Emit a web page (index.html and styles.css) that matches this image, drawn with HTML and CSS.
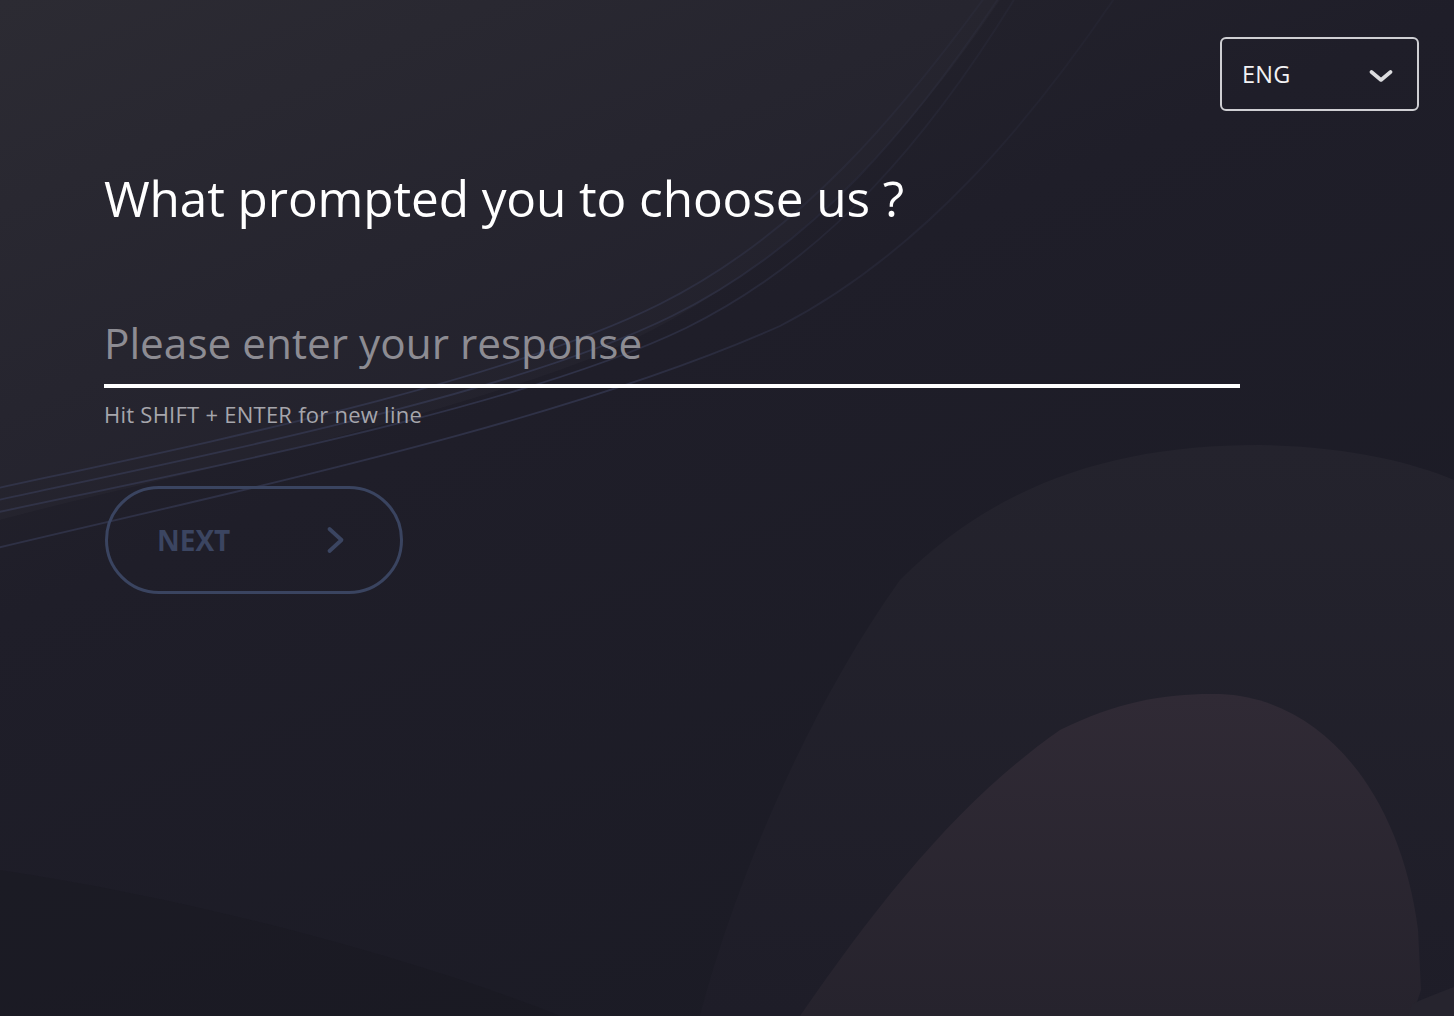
FILE: index.html
```html
<!DOCTYPE html>
<html lang="en">
<head>
<meta charset="utf-8">
<title>What prompted you to choose us ?</title>
<link rel="stylesheet" href="styles.css">
</head>
<body>
<div class="page">
  <svg class="backdrop" viewBox="0 0 1454 1016" preserveAspectRatio="none" aria-hidden="true">
    <defs>
      <linearGradient id="bg" x1="0" y1="0" x2="0.6" y2="1">
        <stop offset="0" stop-color="#28272f"/>
        <stop offset="0.45" stop-color="#1f1e29"/>
        <stop offset="1" stop-color="#1b1b25"/>
      </linearGradient>
      <linearGradient id="outer" x1="0" y1="0" x2="0" y2="1">
        <stop offset="0" stop-color="#24232d"/>
        <stop offset="1" stop-color="#1e1d28"/>
      </linearGradient>
      <linearGradient id="inner" x1="0" y1="0" x2="0" y2="1">
        <stop offset="0" stop-color="#302a35"/>
        <stop offset="1" stop-color="#26232d"/>
      </linearGradient>
      <linearGradient id="lines" gradientUnits="userSpaceOnUse" x1="0" y1="520" x2="1050" y2="0">
        <stop offset="0" stop-color="#3a3f5c" stop-opacity="0.55"/>
        <stop offset="0.5" stop-color="#3a3f5c" stop-opacity="0.6"/>
        <stop offset="0.75" stop-color="#34374f" stop-opacity="0.3"/>
        <stop offset="1" stop-color="#34374f" stop-opacity="0.15"/>
      </linearGradient>
    </defs>
    <rect x="0" y="0" width="1454" height="1016" fill="url(#bg)"/>
    <path d="M0 0 L1000 0 C 900 150, 760 300, 560 370 C 360 440, 150 480, 0 520 Z" fill="#ffffff" opacity="0.018"/>
    <path d="M0 870 C 200 900, 420 960, 560 1016 L0 1016 Z" fill="#16161f" opacity="0.3"/>
    <path d="M700 1016 C 730 900, 800 720, 900 580 C 1000 480, 1120 445, 1260 445 C 1350 447, 1410 462, 1454 480 L1454 1016 Z" fill="url(#outer)"/>
    <path d="M800 1016 C 880 900, 960 800, 1060 730 C 1120 700, 1170 693, 1220 694 C 1320 698, 1400 790, 1418 930 L1421 990 L1412 1016 Z" fill="url(#inner)"/>
    <path d="M1412 1004 C 1425 998, 1440 992, 1454 987 L1454 1016 L1408 1016 Z" fill="#26242e"/>
    <g fill="none" stroke="url(#lines)" stroke-width="1.8">
      <path d="M-20 492 C 200 444, 500 384, 660 304 C 800 234, 900 114, 990 -10"/>
      <path d="M-20 504 C 200 456, 510 396, 672 316 C 814 246, 914 126, 1004 -10"/>
      <path d="M-20 516 C 205 468, 520 408, 686 328 C 828 258, 930 138, 1020 -10"/>
      <path d="M-20 552 C 230 492, 560 424, 780 326 C 920 254, 1030 124, 1120 -10"/>
    </g>
  </svg>

  <header class="topbar">
    <div class="lang-select" role="button" aria-haspopup="listbox">
      <span class="lang-label">ENG</span>
      <svg class="lang-chevron" viewBox="0 0 24 12" width="24" height="12" aria-hidden="true">
        <path d="M2.5 2 L12 10 L21.5 2" fill="none" stroke="#dcdcdf" stroke-width="3.6" stroke-linecap="round" stroke-linejoin="round"/>
      </svg>
    </div>
  </header>

  <main class="question">
    <h1 class="question-title">What prompted you to choose us ?</h1>
    <textarea class="answer" rows="1" placeholder="Please enter your response"></textarea>
    <p class="hint">Hit SHIFT + ENTER for new line</p>
    <button class="next-btn" type="button" disabled>
      <span class="next-label">NEXT</span>
      <svg class="next-chevron" viewBox="0 0 20 28" width="20" height="28" aria-hidden="true">
        <path d="M3.5 3 L15.5 14 L3.5 25" fill="none" stroke="#3b4561" stroke-width="3.8" stroke-linecap="round" stroke-linejoin="round"/>
      </svg>
    </button>
  </main>
</div>
</body>
</html>
```

FILE: styles.css
```css
* { box-sizing: border-box; }

html, body {
  margin: 0;
  padding: 0;
  background: #1e1d28;
}

body {
  font-family: "Open Sans", "Noto Sans", "Liberation Sans", sans-serif;
  color: #ffffff;
}

.page {
  position: relative;
  width: 100%;
  min-height: 1016px;
  overflow: hidden;
}

.backdrop {
  position: absolute;
  inset: 0;
  width: 100%;
  height: 100%;
  z-index: 0;
  display: block;
}

.topbar {
  position: relative;
  z-index: 1;
  display: flex;
  justify-content: flex-end;
  padding: 37px 35px 0 0;
}

.lang-select {
  width: 199px;
  height: 74px;
  border: 2px solid #cfcfd3;
  border-radius: 6px;
  display: flex;
  align-items: center;
  justify-content: space-between;
  padding: 0 24px 0 20px;
  cursor: pointer;
}

.lang-label {
  font-size: 23.5px;
  line-height: 30px;
  color: #f2f2f4;
  letter-spacing: 0.3px;
  margin-top: -1px;
}

.lang-chevron {
  display: block;
  margin-top: 3px;
}

.question {
  position: relative;
  z-index: 1;
  padding-left: 104px;
  display: flex;
  flex-direction: column;
  align-items: flex-start;
}

.question-title {
  margin: 57px 0 0;
  font-size: 49.5px;
  line-height: 60px;
  font-weight: 400;
  color: #ffffff;
  letter-spacing: -0.1px;
}

.answer {
  margin-top: 90px;
  width: 1136px;
  height: 70px;
  padding: 0 0 16px;
  border: none;
  border-bottom: 4px solid #ffffff;
  background: transparent;
  color: #ffffff;
  font-family: inherit;
  font-size: 42.3px;
  line-height: 50px;
  resize: none;
  overflow: hidden;
  outline: none;
  display: block;
}

.answer::placeholder {
  color: #8d8c93;
  opacity: 1;
}

.hint {
  margin: 12px 0 0;
  font-size: 22px;
  line-height: 28px;
  color: #a6a6ac;
  letter-spacing: 0.25px;
}

.next-btn {
  margin-top: 58px;
  margin-left: 1px;
  width: 298px;
  height: 108px;
  border: 3px solid #3a4460;
  border-radius: 54px;
  background: transparent;
  display: flex;
  align-items: center;
  padding: 0 0 0 49px;
  font-family: inherit;
  cursor: default;
}

.next-label {
  font-size: 28px;
  font-weight: 700;
  line-height: 34px;
  color: #3b4561;
  letter-spacing: 0;
}

.next-chevron {
  display: block;
  margin-left: 96px;
}
```
